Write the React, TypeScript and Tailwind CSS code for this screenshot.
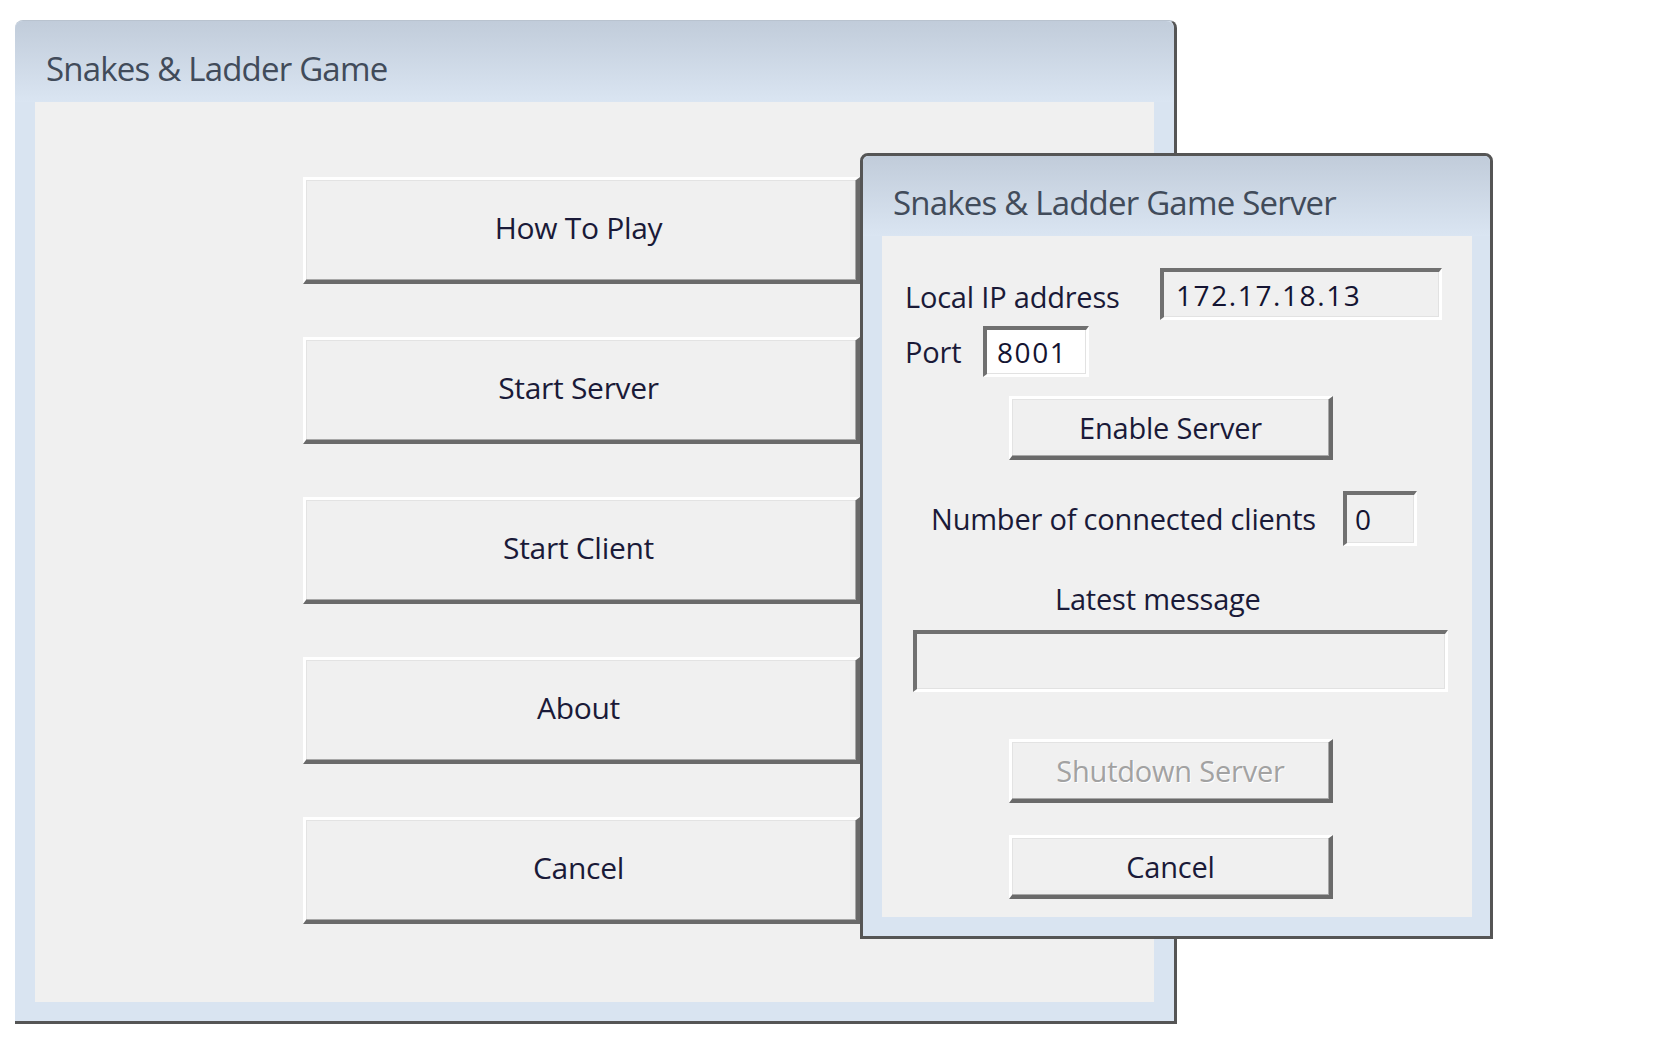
import React from "react";

function WinButton({
  label,
  className = "",
  disabled = false,
}: {
  label: string;
  className?: string;
  disabled?: boolean;
}) {
  return (
    <div
      className={`flex items-center justify-center bg-[#f0f0f0] border-t-[3px] border-l-[3px] border-t-white border-l-white border-b-[4px] border-r-[4px] border-b-[#6a6a6a] border-r-[#6a6a6a] shadow-[inset_-1px_-1px_0_#a8a8a8,inset_1px_1px_0_#e3e3e3] ${className}`}
    >
      {disabled ? (
        <span className="text-[#a2a2a2] [text-shadow:1px_1px_0_#ffffff]">{label}</span>
      ) : (
        <span className="text-[#1a1a38]">{label}</span>
      )}
    </div>
  );
}

function Field({ value = "", className = "" }: { value?: string; className?: string }) {
  return (
    <div
      className={`flex items-center border-t-[4px] border-l-[4px] border-t-[#707070] border-l-[#707070] border-b-[3px] border-r-[3px] border-b-white border-r-white shadow-[inset_-1px_-1px_0_#e2e2e2] text-[#141432] ${className}`}
    >
      {value}
    </div>
  );
}

export default function App() {
  return (
    <div className="relative w-[1674px] h-[1054px] bg-white overflow-hidden font-['Open_Sans','Noto_Sans',sans-serif]">
      {/* main menu window */}
      <div className="absolute left-[15px] top-[20px] w-[1162px] h-[1004px] flex flex-col rounded-tl-[8px] rounded-tr-[8px] border-t border-t-[#b9c3cf] border-r-[3px] border-r-[#555555] border-b-[3px] border-b-[#555555] bg-[#d9e4f1]">
        <div className="h-[81px] shrink-0 flex items-center pl-[31px] pt-[14px] rounded-t-[8px] bg-gradient-to-b from-[#c1ccda] to-[#dae5f2]">
          <span className="text-[33px] leading-none tracking-[-0.8px] text-[#414b5a]">Snakes &amp; Ladder Game</span>
        </div>
        <div className="flex-1 flex pl-[20px] pr-[20px] pb-[19px]">
          <div className="flex-1 bg-[#f0f0f0] flex flex-col gap-[53px] pl-[268px] pt-[75px] text-[30px] tracking-[-0.3px]">
            <WinButton label="How To Play" className="w-[557px] h-[107px] pb-[5px] pr-[5px]" />
            <WinButton label="Start Server" className="w-[557px] h-[107px] pb-[5px] pr-[5px]" />
            <WinButton label="Start Client" className="w-[557px] h-[107px] pb-[5px] pr-[5px]" />
            <WinButton label="About" className="w-[557px] h-[107px] pb-[5px] pr-[5px]" />
            <WinButton label="Cancel" className="w-[557px] h-[107px] pb-[5px] pr-[5px]" />
          </div>
        </div>
      </div>

      {/* server window */}
      <div className="absolute left-[860px] top-[153px] w-[633px] h-[786px] flex flex-col rounded-t-[8px] border-[3px] border-[#555555] bg-[#d9e4f1]">
        <div className="h-[80px] shrink-0 flex items-center pl-[30px] pt-[12px] rounded-t-[6px] bg-gradient-to-b from-[#c1ccda] to-[#dae5f2]">
          <span className="text-[33px] leading-none tracking-[-0.8px] text-[#414b5a]">Snakes &amp; Ladder Game Server</span>
        </div>
        <div className="flex-1 flex pl-[19px] pr-[18px] pb-[19px]">
          <div className="flex-1 bg-[#f0f0f0] flex flex-col text-[29px] tracking-[-0.2px] text-[#1a1a38]">
            <div className="flex items-center mt-[32px]">
              <span className="ml-[23px] mt-[6px] w-[255px] leading-[36px]">Local IP address</span>
              <Field value="172.17.18.13" className="w-[282px] h-[52px] pl-[12px] bg-[#f0f0f0] text-[28px] tracking-[1.6px]" />
            </div>
            <div className="flex items-center mt-[6px]">
              <span className="ml-[23px] w-[78px] leading-[36px]">Port</span>
              <Field value="8001" className="w-[106px] h-[51px] pl-[10px] bg-white text-[28px] tracking-[1.6px]" />
            </div>
            <WinButton label="Enable Server" className="ml-[127px] mt-[19px] w-[324px] h-[64px]" />
            <div className="flex items-center mt-[31px]">
              <span className="ml-[49px] w-[412px] leading-[36px]">Number of connected clients</span>
              <Field value="0" className="w-[74px] h-[55px] pl-[8px] bg-[#f0f0f0] text-[28px]" />
            </div>
            <div className="mt-[35px] ml-[173px] leading-[36px]">Latest message</div>
            <Field className="ml-[31px] mt-[13px] w-[535px] h-[62px] bg-[#f0f0f0]" />
            <WinButton label="Shutdown Server" disabled className="ml-[127px] mt-[47px] w-[324px] h-[64px]" />
            <WinButton label="Cancel" className="ml-[127px] mt-[32px] w-[324px] h-[64px]" />
          </div>
        </div>
      </div>
    </div>
  );
}
